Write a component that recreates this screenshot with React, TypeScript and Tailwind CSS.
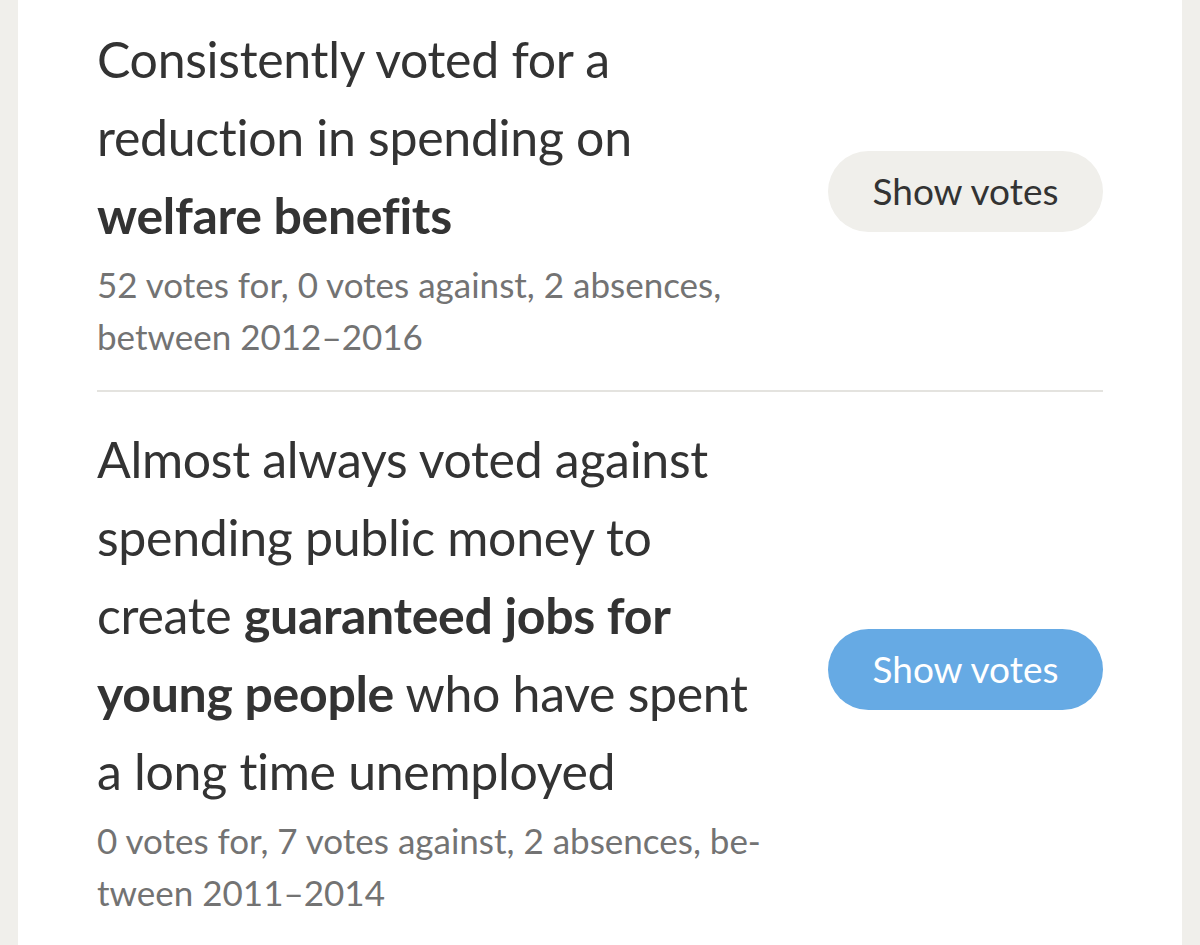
const items = [
  {
    lines: [
      <>Consistently voted for a</>,
      <>reduction in spending on</>,
      <><b className="font-bold">welfare benefits</b></>,
    ],
    meta: ["52 votes for, 0 votes against, 2 absences,", "between 2012–2016"],
    active: false,
  },
  {
    lines: [
      <>Almost always voted against</>,
      <>spending public money to</>,
      <>create <b className="font-bold">guaranteed jobs for</b></>,
      <><b className="font-bold">young people</b> who have spent</>,
      <>a long time unemployed</>,
    ],
    meta: ["0 votes for, 7 votes against, 2 absences, be-", "tween 2011–2014"],
    active: true,
  },
];

const App = () => {
  return (
    <div
      className="min-h-[945px] bg-[#f0efeb] px-[18px] overflow-hidden [font-variant-ligatures:none]"
      style={{ fontFamily: "Lato, 'Open Sans', sans-serif" }}
    >
      <div className="bg-white min-h-[945px] px-[79px] pt-[20px]">
        {items.map((it, i) => (
          <div
            key={i}
            className={`flex items-center justify-between ${i > 0 ? "border-t-2 border-[#e4e3df] pt-[28px]" : ""} pb-[28px]`}
          >
            <div className="w-[700px]">
              <div className="text-[50px] leading-[78px] text-[#333333] tracking-[-0.3px]">
                {it.lines.map((l, j) => (
                  <div key={j} className="whitespace-nowrap">{l}</div>
                ))}
              </div>
              <div className="text-[35px] leading-[52px] text-[#737373] mt-[4px]">
                {it.meta.map((m, j) => (
                  <div key={j} className="whitespace-nowrap">{m}</div>
                ))}
              </div>
            </div>
            <button
              className={`w-[275px] h-[81px] rounded-full text-[37px] ${
                it.active ? "bg-[#66aae4] text-white" : "bg-[#f0efeb] text-[#333333]"
              }`}
            >
              Show votes
            </button>
          </div>
        ))}
      </div>
    </div>
  );
};

export default App;
